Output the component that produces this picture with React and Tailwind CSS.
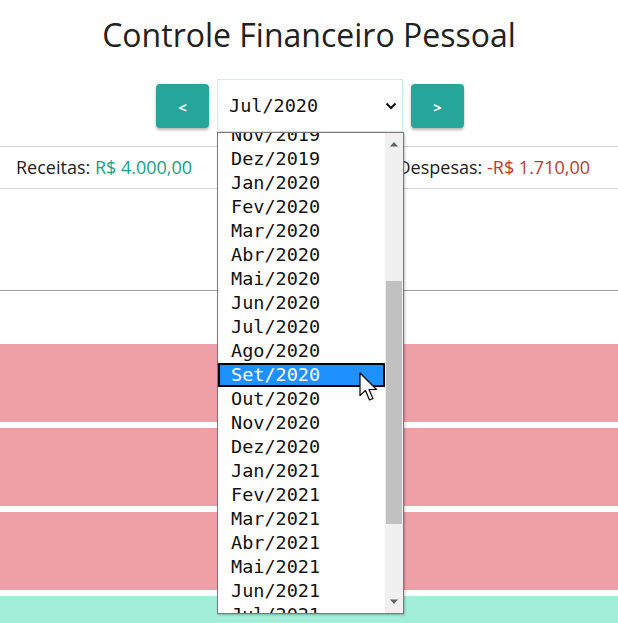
import { useState } from 'react';

const meses = ['Jan', 'Fev', 'Mar', 'Abr', 'Mai', 'Jun', 'Jul', 'Ago', 'Set', 'Out', 'Nov', 'Dez'];

// periodos de Nov/2019 a Jul/2021 (o que aparece na lista aberta)
const periodos = [];
for (let ano = 2019; ano <= 2021; ano++) {
    meses.forEach((m, i) => {
        if (ano === 2019 && i < 10) return;
        if (ano === 2021 && i > 6) return;
        periodos.push(`${m}/${ano}`);
    });
}

function Cursor() {
    return (
        <svg width="19" height="30" viewBox="0 0 19 30" className="absolute left-[139px] top-[7px]">
            <path d="M1 1 L1 23.5 L6.5 18.5 L10.5 28 L14 26.5 L10 17.5 L17.5 17.5 Z" fill="#fff" stroke="#000" strokeWidth="1.2" strokeLinejoin="round" />
        </svg>
    );
}

export default function App() {
    const [periodo] = useState('Jul/2020');
    const hover = 'Set/2020';

    return (
        <div className="min-h-screen bg-white text-[#212121]" style={{ fontFamily: '"Open Sans", "Noto Sans", sans-serif' }}>
            <h1 className="text-center text-[32px] leading-[40px] pt-[15px]">Controle Financeiro Pessoal</h1>

            <div className="flex justify-center items-center gap-2 mt-[24px] pl-[2px]">
                <button className="w-[53px] h-[44px] rounded bg-[#26a69a] text-white text-[15px] font-bold shadow-[0_2px_3px_rgba(0,0,0,0.3)] pt-[4px]">&lt;</button>

                <div className="relative">
                    <div className="w-[186px] h-[53px] border border-[#c9ecec] bg-white flex items-center justify-between pl-[11px] pr-[5px]">
                        <span className="text-[18.5px] text-[#111]" style={{ fontFamily: '"DejaVu Sans Mono", monospace' }}>{periodo}</span>
                        <svg width="12" height="8" viewBox="0 0 12 8">
                            <path d="M1.5 1.5 L6 6 L10.5 1.5" fill="none" stroke="#111" strokeWidth="2" />
                        </svg>
                    </div>

                    {/* lista aberta do select */}
                    <div className="absolute left-0 top-full w-[187px] h-[482px] border border-[#7a7a7a] bg-white flex overflow-hidden z-10 shadow-[1px_1px_2px_rgba(0,0,0,0.25)]">
                        <div className="flex-1 overflow-hidden">
                            <div className="mt-[-10px]" style={{ fontFamily: '"DejaVu Sans Mono", monospace' }}>
                                {periodos.map((p) => (
                                    <div
                                        key={p}
                                        className={p === hover
                                            ? 'relative h-[24px] leading-[20px] pl-[11px] text-[18.5px] bg-[#1e90ff] text-white border-2 border-black'
                                            : 'h-[24px] leading-[24px] pl-[13px] text-[18.5px] text-[#111]'}
                                    >
                                        {p}
                                        {p === hover && <Cursor />}
                                    </div>
                                ))}
                            </div>
                        </div>
                        <div className="w-[18px] bg-[#f0f0f0] flex flex-col items-center">
                            <svg width="10" height="6" viewBox="0 0 10 6" className="mt-[8px]">
                                <path d="M1 5.5 L5 1 L9 5.5 Z" fill="#606060" />
                            </svg>
                            <div className="w-[16px] h-[243px] bg-[#c1c1c1] mt-[134px]" />
                            <div className="flex-1" />
                            <svg width="10" height="6" viewBox="0 0 10 6" className="mb-[8px]">
                                <path d="M1 0.5 L5 5 L9 0.5 Z" fill="#606060" />
                            </svg>
                        </div>
                    </div>
                </div>

                <button className="w-[53px] h-[44px] rounded bg-[#26a69a] text-white text-[15px] font-bold shadow-[0_2px_3px_rgba(0,0,0,0.3)] pt-[4px]">&gt;</button>
            </div>

            <div className="mt-[14px] h-[43px] border-y border-[#d6d6d6] flex justify-between items-center pl-[16px] pr-[28px] text-[18px]">
                <span>Receitas: <span className="text-[#16a085]">R$ 4.000,00</span></span>
                <span>Despesas: <span className="text-[#c0392b]">-R$ 1.710,00</span></span>
            </div>

            <div className="h-[102px] border-b border-[#9e9e9e]" />

            <div className="mt-[53px] flex flex-col gap-[6px]">
                <div className="h-[78px] bg-[#efa0a6]" />
                <div className="h-[78px] bg-[#efa0a6]" />
                <div className="h-[78px] bg-[#efa0a6]" />
                <div className="h-[78px] bg-[#a3eed9]" />
            </div>
        </div>
    );
}
